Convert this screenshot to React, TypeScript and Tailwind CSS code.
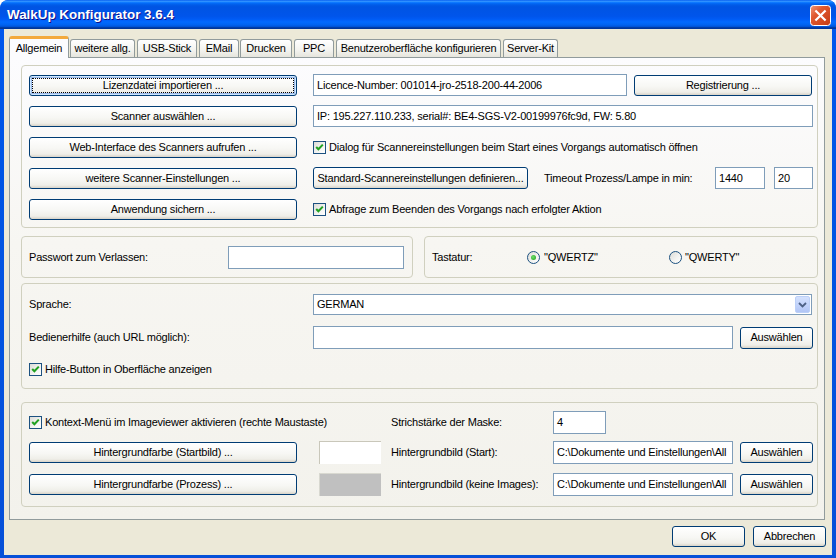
import React from "react";

type P = { children?: React.ReactNode; className?: string };

const Btn = ({ children, className = "", focus = false }: P & { focus?: boolean }) => (
  <div
    className={`flex items-center justify-center shrink-0 rounded-[3px] border border-[#003c74] bg-[linear-gradient(180deg,#ffffff_0%,#f7f7f4_55%,#efeee8_85%,#d8d3c8_100%)] text-[11px] leading-none text-black whitespace-nowrap ${
      focus
        ? "outline outline-1 outline-dotted outline-black outline-offset-[-4px] shadow-[inset_0_0_0_1px_#cee7ff,inset_0_0_0_2px_#98b8ea]"
        : ""
    } ${className}`}
  >
    {children}
  </div>
);

const Field = ({ children, className = "" }: P) => (
  <div
    className={`flex items-center shrink-0 overflow-hidden whitespace-nowrap border border-[#7f9db9] bg-white pl-[3px] text-[11px] leading-none text-black ${className}`}
  >
    {children}
  </div>
);

const Check = () => (
  <span className="flex h-[13px] w-[13px] shrink-0 items-center justify-center border border-[#1c5180] bg-[linear-gradient(135deg,#dcdcd7_0%,#f4f4f2_60%,#ffffff_100%)]">
    <svg width="9" height="9" viewBox="0 0 9 9">
      <path d="M1.2 4 L3.4 6.3 L7.8 1.6" stroke="#21a121" strokeWidth="2" fill="none" />
    </svg>
  </span>
);

const Radio = ({ on = false }: { on?: boolean }) => (
  <span className="flex h-[13px] w-[13px] shrink-0 items-center justify-center rounded-full border border-[#1c5180] bg-[linear-gradient(135deg,#dcdcd7_0%,#f4f4f2_60%,#ffffff_100%)]">
    {on && (
      <span className="h-[5px] w-[5px] rounded-full bg-[radial-gradient(circle_at_40%_40%,#6fe06b,#1a9c1a)]" />
    )}
  </span>
);

const Group = ({ children, className = "" }: P) => (
  <div className={`rounded-[4px] border border-[#d0d0bf] ${className}`}>{children}</div>
);

const Tab = ({ children, className = "" }: P) => (
  <div
    className={`flex h-[18px] shrink-0 items-center justify-center rounded-t-[3px] border border-b-0 border-[#919b9c] bg-[linear-gradient(180deg,#ffffff_0%,#f3f3ef_60%,#e6e5dd_100%)] text-[11px] leading-none text-black whitespace-nowrap ${className}`}
  >
    {children}
  </div>
);

export default function App() {
  return (
    <div className="flex h-[558px] w-[836px] flex-col overflow-hidden rounded-t-[8px] bg-[linear-gradient(180deg,#0058ee_0%,#0055e5_30%,#0650d8_100%)] font-['Liberation_Sans',Arial,sans-serif] text-black">
      {/* Title bar */}
      <div className="flex h-[29px] shrink-0 items-center justify-between rounded-t-[8px] bg-[linear-gradient(180deg,#0058ee_0%,#3593ff_4%,#288eff_6%,#127dff_8%,#036ffc_10%,#0262ee_14%,#0057e5_20%,#0054e3_24%,#0055eb_56%,#005bf5_66%,#026afe_76%,#0062ef_86%,#0052d6_92%,#0040ab_94%,#003092_100%)] pl-[7px] pr-[5px]">
        <span className="pt-[1px] text-[13.4px] font-bold leading-none text-white [text-shadow:1px_1px_#0f1089]">
          WalkUp Konfigurator 3.6.4
        </span>
        <svg width="21" height="21" viewBox="0 0 21 21" className="mt-[2px]">
          <defs>
            <linearGradient id="cg" x1="0" y1="0" x2="1" y2="1">
              <stop offset="0" stopColor="#f09a7c" />
              <stop offset="0.35" stopColor="#e0592f" />
              <stop offset="1" stopColor="#c43a12" />
            </linearGradient>
          </defs>
          <rect x="0.5" y="0.5" width="20" height="20" rx="3" fill="url(#cg)" stroke="#ffffff" />
          <path d="M6.2 6.2 L14.8 14.8 M14.8 6.2 L6.2 14.8" stroke="#ffffff" strokeWidth="2.2" strokeLinecap="square" />
        </svg>
      </div>

      {/* Body */}
      <div className="mx-[4px] mb-[3px] flex flex-1 flex-col bg-[#ece9d8] tracking-[-0.2px]">
        {/* Tabs */}
        <div className="flex h-[28px] shrink-0 items-end pl-[5px]">
          <div className="relative z-10 -mb-[1px] flex h-[22px] w-[60px] shrink-0 items-center justify-center rounded-t-[3px] border border-b-0 border-[#919b9c] border-t-[3px] border-t-[#f3a93c] bg-[#fcfcfe] text-[11px] leading-none">
            Allgemein
          </div>
          <Tab className="ml-[1px] w-[65px]">weitere allg.</Tab>
          <Tab className="ml-[2px] w-[60px]">USB-Stick</Tab>
          <Tab className="ml-[2px] w-[40px]">EMail</Tab>
          <Tab className="ml-[1px] w-[52px]">Drucken</Tab>
          <Tab className="ml-[2px] w-[40px]">PPC</Tab>
          <Tab className="ml-[2px] w-[165px]">Benutzeroberfläche konfigurieren</Tab>
          <Tab className="ml-[2px] w-[55px]">Server-Kit</Tab>
        </div>

        {/* Panel */}
        <div className="ml-[5px] flex h-[463px] w-[816px] shrink-0 flex-col border border-[#919b9c] bg-[linear-gradient(180deg,#fcfcfe_0%,#f7f6f2_40%,#f3f2ec_100%)] text-[11px] leading-none">
          {/* Group 1 */}
          <Group className="ml-[11px] mr-[6px] mt-[7px] flex h-[163px] flex-col gap-[9px] pl-[7px] pt-[8px]">
            <div className="flex h-[22px] items-center">
              <Btn focus className="h-[21px] w-[268px]">Lizenzdatei importieren ...</Btn>
              <Field className="ml-[16px] h-[22px] w-[314px]">Licence-Number: 001014-jro-2518-200-44-2006</Field>
              <Btn className="ml-[7px] h-[21px] w-[178px]">Registrierung ...</Btn>
            </div>
            <div className="flex h-[22px] items-center">
              <Btn className="h-[21px] w-[268px]">Scanner auswählen ...</Btn>
              <Field className="ml-[16px] h-[22px] w-[500px]">IP: 195.227.110.233, serial#: BE4-SGS-V2-00199976fc9d, FW: 5.80</Field>
            </div>
            <div className="flex h-[22px] items-center">
              <Btn className="h-[21px] w-[268px]">Web-Interface des Scanners aufrufen ...</Btn>
              <span className="ml-[16px]"><Check /></span>
              <span className="ml-[3px] whitespace-nowrap">Dialog für Scannereinstellungen beim Start eines Vorgangs automatisch öffnen</span>
            </div>
            <div className="flex h-[22px] items-center">
              <Btn className="h-[21px] w-[268px]">weitere Scanner-Einstellungen ...</Btn>
              <Btn className="ml-[16px] h-[22px] w-[215px]">Standard-Scannereinstellungen definieren...</Btn>
              <span className="ml-[16px] w-[171px] whitespace-nowrap">Timeout Prozess/Lampe in min:</span>
              <Field className="h-[22px] w-[50px]">1440</Field>
              <Field className="ml-[9px] h-[22px] w-[39px]">20</Field>
            </div>
            <div className="flex h-[22px] items-center">
              <Btn className="h-[21px] w-[268px]">Anwendung sichern ...</Btn>
              <span className="ml-[16px]"><Check /></span>
              <span className="ml-[3px] whitespace-nowrap">Abfrage zum Beenden des Vorgangs nach erfolgter Aktion</span>
            </div>
          </Group>

          {/* Group 2 */}
          <div className="ml-[11px] mr-[6px] mt-[8px] flex gap-[11px]">
            <Group className="flex h-[42px] w-[392px] items-center pl-[7px]">
              <span className="w-[199px]">Passwort zum Verlassen:</span>
              <Field className="h-[23px] w-[176px]" />
            </Group>
            <Group className="flex h-[42px] w-[394px] items-center pl-[7px]">
              <span className="w-[95px]">Tastatur:</span>
              <Radio on />
              <span className="ml-[4px] w-[125px]">"QWERTZ"</span>
              <Radio />
              <span className="ml-[3px]">"QWERTY"</span>
            </Group>
          </div>

          {/* Group 3 */}
          <Group className="ml-[11px] mr-[6px] mt-[5px] flex h-[106px] flex-col pl-[7px] pt-[10px]">
            <div className="flex h-[21px] items-center">
              <span className="w-[284px]">Sprache:</span>
              <div className="flex h-[21px] w-[499px] items-center border border-[#7f9db9] bg-white pl-[3px]">
                <span>GERMAN</span>
                <div className="ml-auto mr-[1px] flex h-[17px] w-[15px] items-center justify-center rounded-[2px] border border-[#bcd0f8] bg-[linear-gradient(180deg,#d4e1fd_0%,#c3d4fb_50%,#b1c5f5_100%)]">
                  <svg width="9" height="6" viewBox="0 0 9 6">
                    <path d="M1 1 L4.5 4.5 L8 1" stroke="#4d6185" strokeWidth="1.8" fill="none" />
                  </svg>
                </div>
              </div>
            </div>
            <div className="mt-[11px] flex h-[23px] items-center">
              <span className="w-[284px]">Bedienerhilfe (auch URL möglich):</span>
              <Field className="h-[23px] w-[420px]" />
              <Btn className="ml-[7px] h-[22px] w-[73px]">Auswählen</Btn>
            </div>
            <div className="mt-[14px] flex items-center">
              <Check />
              <span className="ml-[3px]">Hilfe-Button in Oberfläche anzeigen</span>
            </div>
          </Group>

          {/* Group 4 */}
          <Group className="ml-[11px] mr-[6px] mt-[13px] flex h-[105px] flex-col pl-[7px] pt-[8px]">
            <div className="flex h-[23px] items-center">
              <div className="flex w-[362px] items-center">
                <Check />
                <span className="ml-[3px] whitespace-nowrap">Kontext-Menü im Imageviewer aktivieren (rechte Maustaste)</span>
              </div>
              <span className="w-[162px]">Strichstärke der Maske:</span>
              <Field className="h-[23px] w-[53px]">4</Field>
            </div>
            <div className="mt-[7px] flex h-[23px] items-center">
              <Btn className="h-[21px] w-[268px]">Hintergrundfarbe (Startbild) ...</Btn>
              <div className="ml-[22px] h-[23px] w-[62px] shrink-0 border-l border-t border-[#c9c7ba] bg-white" />
              <span className="ml-[10px] w-[162px]">Hintergrundbild (Start):</span>
              <Field className="h-[23px] w-[180px]">{"C:\\Dokumente und Einstellungen\\All"}</Field>
              <Btn className="ml-[7px] h-[21px] w-[73px]">Auswählen</Btn>
            </div>
            <div className="mt-[9px] flex h-[23px] items-center">
              <Btn className="h-[21px] w-[268px]">Hintergrundfarbe (Prozess) ...</Btn>
              <div className="ml-[22px] h-[23px] w-[62px] shrink-0 border-l border-t border-[#d8d8d0] bg-[#c0c0c0]" />
              <span className="ml-[10px] w-[162px]">Hintergrundbild (keine Images):</span>
              <Field className="h-[23px] w-[180px]">{"C:\\Dokumente und Einstellungen\\All"}</Field>
              <Btn className="ml-[7px] h-[21px] w-[73px]">Auswählen</Btn>
            </div>
          </Group>
        </div>

        {/* Bottom buttons */}
        <div className="mt-[6px] flex justify-end gap-[8px] pr-[6px]">
          <Btn className="h-[21px] w-[73px]">OK</Btn>
          <Btn className="h-[21px] w-[73px]">Abbrechen</Btn>
        </div>
      </div>
    </div>
  );
}
